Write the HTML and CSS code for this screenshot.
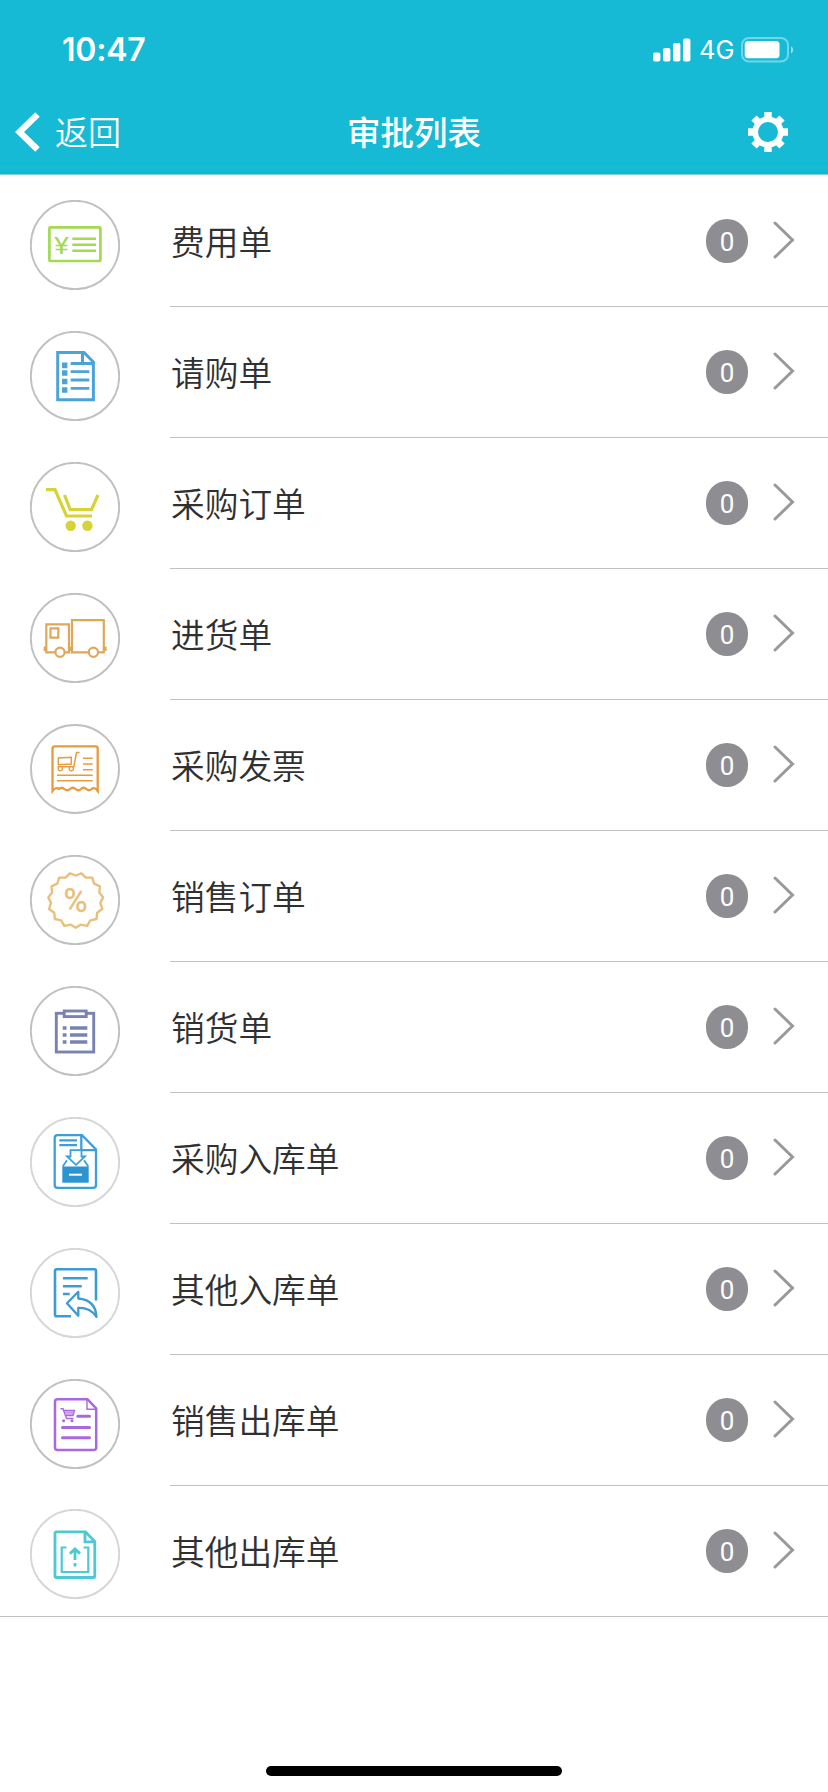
FILE: index.html
```html
<!DOCTYPE html>
<html lang="zh-CN">
<head>
<meta charset="utf-8">
<title>审批列表</title>
<link rel="stylesheet" href="styles.css">
</head>
<body>
<div class="screen">
  <header class="header">
    <div class="status">
      <span class="time">10:47</span>
      <div class="status-right">
        <svg class="signal" width="38" height="24" viewBox="0 0 38 24" fill="#fff">
          <rect x="0" y="14.5" width="7.4" height="9" rx="2"/><rect x="10" y="10" width="7.4" height="13.5" rx="2"/><rect x="20" y="5" width="7.4" height="18.5" rx="2"/><rect x="30" y="0.5" width="7.4" height="23" rx="2"/>
        </svg>
        <span class="network">4G</span>
        <svg class="battery" width="54" height="26" viewBox="0 0 54 26">
          <rect x="1" y="1" width="46" height="23.5" rx="7" fill="none" stroke="#6fd7e6" stroke-width="2"/>
          <rect x="3.7" y="4" width="34.8" height="17.3" rx="3.5" fill="#fff"/>
          <path d="M50 9.2a4 4 0 0 1 0 7.2z" fill="#8be0ec"/>
        </svg>
      </div>
    </div>
    <nav class="nav">
      <div class="back">
        <svg width="26" height="42" viewBox="0 0 26 42" fill="none" stroke="#fff" stroke-width="6.4"><path d="M22.5 3.500L4.500 21L22.500 38.500"/></svg>
        <span class="back-text">返回</span>
      </div>
      <h1 class="title">审批列表</h1>
      <svg class="gear" width="42" height="42" viewBox="-21 -21 42 42">
        <circle r="12.8" fill="none" stroke="#fff" stroke-width="5.6"/>
        <g fill="none" stroke="#fff" stroke-width="7.4">
          <path d="M0-14V-20M0 14V20M-14 0H-20M14 0H20"/>
          <path d="M9-9L14-14M-9-9L-14-14M9 9L14 14M-9 9L-14 14"/>
        </g>
      </svg>
    </nav>
  </header>

  <main class="list">
    <div class="row">
      <svg class="icon" viewBox="0 0 90 90" stroke="#a3da52">
        <circle class="ring" cx="45" cy="45" r="44.200"/>
        <rect x="19.400" y="27.400" width="51" height="33.600" rx="1" stroke-width="2.700"/>
        <text class="yen" x="24" y="53.500" textLength="15" lengthAdjust="spacingAndGlyphs">¥</text>
        <path d="M42.300 38.700H66M42.300 44.700H66M42.300 50.700H66" stroke-width="2.600"/>
      </svg>
      <div class="cell"><span class="label">费用单</span><span class="badge">0</span><svg class="chevron" viewBox="0 0 22 38"><path d="M2 2L19.500 19L2 36"/></svg></div>
    </div>
    <div class="row">
      <svg class="icon" viewBox="0 0 90 90" stroke="#4ba3d8">
        <circle class="ring" cx="45" cy="45" r="44.200"/>
        <path d="M27.700 21.400H54L63.400 31V68.800H27.700ZM52.500 21.400V32.600M40.700 32.600H63.400" stroke-width="3"/>
        <path d="M40.700 40.700H59.300M40.700 49H59.300M40.700 57.300H59.300" stroke-width="2.800"/>
        <path d="M32 34.400H37.400M32 42H37.400M32 50.500H37.400M32 59H37.400" stroke-width="5.600"/>
      </svg>
      <div class="cell"><span class="label">请购单</span><span class="badge">0</span><svg class="chevron" viewBox="0 0 22 38"><path d="M2 2L19.500 19L2 36"/></svg></div>
    </div>
    <div class="row">
      <svg class="icon" viewBox="0 0 90 90" stroke="#d5d338">
        <circle class="ring" cx="45" cy="45" r="44.200"/>
        <path d="M16 27.700H25L36.500 54H62M34.500 33L40.200 47.700H61.500L68 33" stroke-width="3.200"/>
        <g fill="#d5d338" stroke="none"><circle cx="40.700" cy="63.800" r="5.200"/><circle cx="57.400" cy="63.800" r="5.200"/></g>
      </svg>
      <div class="cell"><span class="label">采购订单</span><span class="badge">0</span><svg class="chevron" viewBox="0 0 22 38"><path d="M2 2L19.500 19L2 36"/></svg></div>
    </div>
    <div class="row">
      <svg class="icon" viewBox="0 0 90 90" stroke="#dfa859" stroke-width="2.200">
        <circle class="ring" cx="45" cy="45" r="44.200"/>
        <path d="M16.300 31.300H39V59.300H16.300ZM20.500 35.300H28.300V44.600H20.500ZM42 27.200H73.800V59.300H42Z"/>
        <path d="M15 53.500V58M40.500 53.500V58M75.200 53.500V58" stroke-width="2.800"/>
        <circle cx="30" cy="59.300" r="4.600" fill="#fff"/><circle cx="63.400" cy="59.300" r="4.600" fill="#fff"/>
      </svg>
      <div class="cell"><span class="label">进货单</span><span class="badge">0</span><svg class="chevron" viewBox="0 0 22 38"><path d="M2 2L19.500 19L2 36"/></svg></div>
    </div>
    <div class="row">
      <svg class="icon" viewBox="0 0 90 90" stroke="#e79b3f">
        <circle class="ring" cx="45" cy="45" r="44"/>
        <path d="M22.500 67V24.500Q22.500 22.300 24.700 22.300H65.500Q67.700 22.300 67.700 24.500V67Q64.500 62.500 61.600 65Q58.800 67.500 56.400 65Q53.500 62.500 51 65Q48.300 67.500 45.600 65Q42.800 62.500 40 65Q37.200 67.500 34.400 65Q31.800 62.500 29 65Q26 62.500 22.500 67Z" stroke-width="2.300"/>
        <path d="M28.300 34L41.300 33.200V40L28.300 40.800ZM27.500 42.700H43.800L46.500 28.600H49.600" stroke-width="1.500"/>
        <circle cx="30.300" cy="44.800" r="2.100" fill="#fff" stroke-width="1.300"/><circle cx="41.300" cy="44.800" r="2.100" fill="#fff" stroke-width="1.300"/>
        <path d="M53 34.300H62.700M53 40H62.700M53 45.700H62.700M27 51.300H62.700M27 56.700H62.700" stroke-width="1.500"/>
      </svg>
      <div class="cell"><span class="label">采购发票</span><span class="badge">0</span><svg class="chevron" viewBox="0 0 22 38"><path d="M2 2L19.500 19L2 36"/></svg></div>
    </div>
    <div class="row">
      <svg class="icon" viewBox="0 0 90 90" stroke="#e7c07e">
        <circle class="ring" cx="45" cy="45" r="44.200"/>
        <path transform="translate(45.700 45.300)" stroke-width="2.400" stroke-linejoin="round" d="M0-24.800L5.800-27L10.100-22.700L16.500-22.700L18.400-16.600L24.200-14L23.600-7.700L27.400-2.900L24.700 2.600L26.600 8.700L21.500 12.400L20.800 18.700L14.600 20.100L11.400 25.600L5.200 24.300L0 27.500L-5.200 24.300L-11.400 25.600L-14.600 20.100L-20.800 18.700L-21.500 12.400L-26.600 8.700L-24.700 2.600L-27.400-2.900L-23.600-7.700L-24.200-14L-18.400-16.600L-16.500-22.700L-10.100-22.700L-5.800-27Z"/>
        <text class="percent" x="33.500" y="56.500" textLength="24" lengthAdjust="spacingAndGlyphs">%</text>
      </svg>
      <div class="cell"><span class="label">销售订单</span><span class="badge">0</span><svg class="chevron" viewBox="0 0 22 38"><path d="M2 2L19.500 19L2 36"/></svg></div>
    </div>
    <div class="row">
      <svg class="icon" viewBox="0 0 90 90" stroke="#7883b3">
        <circle class="ring" cx="45" cy="45" r="44.200"/>
        <rect x="26.300" y="27.300" width="37.400" height="38.700" stroke-width="2.900"/>
        <rect x="34.200" y="25" width="22" height="5.600" fill="#fff" stroke-width="2.900"/>
        <path d="M32.700 42H36.500M32.700 49H36.500M32.700 56H36.500M40 42H57.300M40 49H57.300M40 56H57.300" stroke-width="3.600"/>
      </svg>
      <div class="cell"><span class="label">销货单</span><span class="badge">0</span><svg class="chevron" viewBox="0 0 22 38"><path d="M2 2L19.500 19L2 36"/></svg></div>
    </div>
    <div class="row">
      <svg class="icon" viewBox="0 0 90 90" stroke="#3c9fd8">
        <circle class="ring ring-light" cx="45" cy="45" r="44.200"/>
        <path d="M27.500 18.200H52L66 32.500V68Q66 70.800 63.200 70.800H27.500Q24.700 70.800 24.700 68V21Q24.700 18.200 27.500 18.200ZM51.300 18.500V33.200H65.800" stroke-width="2.300"/>
        <path d="M29.300 23.400H47M29.300 28.200H47" stroke-width="2.200"/>
        <path d="M32.700 49.500L37 43.300M58.300 49.500L54 43.300" stroke-width="1.800"/>
        <path d="M40.500 33.200H51.500V39.500H55L46 47.800L37 39.500H40.500Z" fill="#fff" stroke-width="1.800"/>
        <rect x="32.300" y="49.500" width="26.400" height="16.200" fill="#2c94d0" stroke="none"/>
        <path d="M39 57.700H52" stroke="#fff" stroke-width="2"/>
      </svg>
      <div class="cell"><span class="label">采购入库单</span><span class="badge">0</span><svg class="chevron" viewBox="0 0 22 38"><path d="M2 2L19.500 19L2 36"/></svg></div>
    </div>
    <div class="row">
      <svg class="icon" viewBox="0 0 90 90" stroke="#3c9bd2" stroke-width="2.600" stroke-linejoin="round">
        <circle class="ring ring-light" cx="45" cy="45" r="44.200"/>
        <path d="M66 52.500V23Q66 21.300 64.300 21.300H26.700Q25 21.300 25 23V66.500Q25 68.300 26.700 68.300H41"/>
        <path d="M33 30.300H57.700M33 38.300H51.700M33 46H39.700"/>
        <path d="M48.300 43.800L37 55.200L48.300 67.700V60Q60 59.500 66.500 68.800Q65.500 52 48.300 50.500Z" stroke-width="2.300"/>
      </svg>
      <div class="cell"><span class="label">其他入库单</span><span class="badge">0</span><svg class="chevron" viewBox="0 0 22 38"><path d="M2 2L19.500 19L2 36"/></svg></div>
    </div>
    <div class="row">
      <svg class="icon" viewBox="0 0 90 90" stroke="#a968df">
        <circle class="ring" cx="45" cy="45" r="44.200"/>
        <path d="M27.500 20.200H57.500L66.200 29.500V68.500Q66.200 71 63.700 71H27.500Q25 71 25 68.500V22.700Q25 20.200 27.500 20.200Z" stroke-width="2.500"/>
        <path d="M57 20.200V30.300H66.200" stroke-width="1.400"/>
        <path d="M47.800 37.300H59.500M32.500 48.400H59.500M32.500 58.700H59.500" stroke-width="3" stroke-linecap="round"/>
        <path d="M30.500 29.800H33L36.500 39.500H43.500M34 31.500H44.500L43 36.500H36" stroke-width="1.400"/>
        <path d="M35 33.200H43.800M35.800 35H43" stroke-width="1.500" opacity=".7"/>
        <g fill="#a968df" stroke="none"><circle cx="33.600" cy="41.800" r="1.500"/><circle cx="42" cy="41.800" r="1.500"/></g>
      </svg>
      <div class="cell"><span class="label">销售出库单</span><span class="badge">0</span><svg class="chevron" viewBox="0 0 22 38"><path d="M2 2L19.500 19L2 36"/></svg></div>
    </div>
    <div class="row">
      <svg class="icon icon-last" viewBox="0 0 90 90" stroke="#4cc9d3">
        <circle class="ring ring-light" cx="45" cy="45" r="44.200"/>
        <path d="M26.500 22.800H55.500L64.800 32.500V67Q64.800 68.500 63.300 68.500H26.500Q25 68.500 25 67V24.300Q25 22.800 26.500 22.800ZM55 22.800V32.800H64.800" stroke-width="2.800"/>
        <path d="M36.500 38.500H31.700V63H58.300V38.500H53.500" stroke-width="2.200"/>
        <path d="M45 40.500V51M40 44.600L45 40L50 44.600M45 54V57.400" stroke-width="2.800"/>
      </svg>
      <div class="cell"><span class="label">其他出库单</span><span class="badge">0</span><svg class="chevron" viewBox="0 0 22 38"><path d="M2 2L19.500 19L2 36"/></svg></div>
    </div>
  </main>

  <footer class="footer"><div class="home-indicator"></div></footer>
</div>
</body>
</html>
```
FILE: styles.css
```css
* { box-sizing: border-box; }

body {
  margin: 0;
  background: #fff;
  font-family: "Noto Sans CJK SC", sans-serif;
  color: #303030;
}

.screen {
  display: flex;
  flex-direction: column;
  width: 828px;
  height: 1792px;
  overflow: hidden;
}

.header {
  height: 176px;
  color: #fff;
  background: linear-gradient(#17bad5 161px, #0abfd4 164px, #22b7d5 168px, #02bfd3 171px, #04bdd2 174px, #8ccbd6 174px, #8ccbd6 175px, #fff 175px);
}

.status {
  display: flex;
  justify-content: space-between;
  align-items: center;
  height: 100px;
  padding: 0 33px 0 62px;
}

.time {
  font: 600 32px/40px Inter, sans-serif;
  letter-spacing: -0.2px;
}

.status-right {
  display: flex;
  align-items: center;
}

.network {
  width: 35px;
  margin: 0 7px 0 8px;
  font: 400 25.5px/30px Inter, sans-serif;
}

.nav {
  display: grid;
  grid-template-columns: 1fr auto 1fr;
  align-items: center;
  height: 64px;
  padding: 0 39px 0 15px;
}

.back {
  display: flex;
  align-items: center;
  gap: 14px;
  font-size: 33px;
  line-height: 40px;
  font-weight: 350;
}

.back-text { margin-top: -2px; }

.title {
  margin: -2px 0 0 -24px;
  padding-left: 48px;
  font-size: 33.5px;
  line-height: 40px;
  font-weight: 500;
}

.gear { justify-self: end; }

.row {
  display: flex;
  height: 131px;
  padding-left: 30px;
}

.row:last-child { border-bottom: 1px solid #c2c2c4; }

.icon {
  flex: none;
  width: 90px;
  height: 90px;
  margin: 24px 50px 0 0;
  fill: none;
}

.icon-last { margin-top: 23px; }

.ring {
  stroke: #c0c0c0;
  stroke-width: 1.9px;
}

.ring-light { stroke: #d6d6d6; }

.yen, .percent {
  stroke: none;
  font-family: Roboto, sans-serif;
}

.yen {
  fill: #a3da52;
  font-size: 24.5px;
}

.percent {
  fill: #e7c07e;
  stroke: #e7c07e;
  stroke-width: 0.4px;
  font-size: 33px;
}

.cell {
  flex: 1;
  display: flex;
  align-items: center;
  padding-right: 33px;
  border-bottom: 1px solid #c2c2c4;
}

.row:last-child .cell { border-bottom: 0; }

.label {
  flex: 1;
  padding-left: 1px;
  font-size: 33.7px;
  font-weight: 350;
  line-height: 48px;
}

.badge {
  width: 42px;
  height: 44px;
  margin-right: 25px;
  border-radius: 21px;
  background: #8e8d92;
  color: #fff;
  font: 400 26px/46px Roboto, sans-serif;
  text-align: center;
}

.chevron {
  width: 22px;
  height: 38px;
  margin-top: -2px;
  fill: none;
  stroke: #999;
  stroke-width: 3px;
  stroke-linecap: round;
}

.footer {
  flex: 1;
  display: flex;
  justify-content: center;
  align-items: flex-end;
  padding-bottom: 16px;
}

.home-indicator {
  width: 296px;
  height: 10px;
  border-radius: 5px;
  background: #000;
}
```
